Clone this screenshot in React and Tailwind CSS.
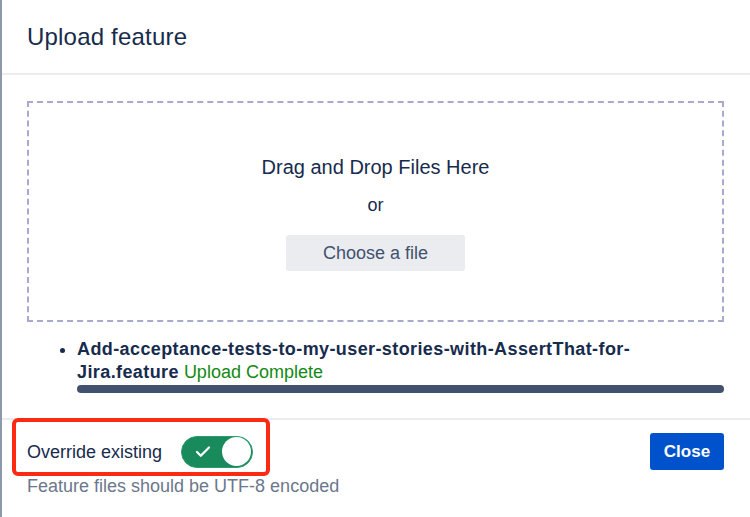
import { Check } from "lucide-react";

const App = () => {
  return (
    <div
      className="relative flex w-[750px] h-[517px] overflow-hidden bg-white text-[#172b4d]"
      style={{ fontFamily: '"Liberation Sans", Arial, sans-serif' }}>
      <div className="w-[2px] bg-[#8e98ad] shrink-0" />

      <div className="flex-1 flex flex-col">
        <div className="h-[75px] flex items-center pl-[25px] border-b-2 border-[#ebecf0] shrink-0">
          <h1 className="text-[24px] leading-[28px] tracking-[0.2px]">Upload feature</h1>
        </div>

        <div className="pl-[25px] pr-[26px]">
          <div className="mt-[26px] h-[221px] border-2 border-dashed border-[#a8a9cf] flex flex-col items-center pt-[52px]">
            <p className="text-[20px] leading-[24px]">Drag and Drop Files Here</p>
            <p className="text-[18px] leading-[22px] mt-[15px]">or</p>
            <button className="mt-[19px] w-[179px] h-[36px] rounded-[3px] bg-[#ebecf0] text-[18px] text-[#42526e]">
              Choose a file
            </button>
          </div>

          <ul className="list-disc pl-[50px] mt-[16px]">
            <li className="text-[18px] leading-[23px]">
              <span className="font-bold tracking-[0.4px]">
                Add-acceptance-tests-to-my-user-stories-with-AssertThat-for-
                <br />
                Jira.feature
              </span>{" "}
              <span className="text-[#128a12]">Upload Complete</span>
              <div className="mt-[1px] h-[8px] rounded-full bg-[#42526e]" />
            </li>
          </ul>
        </div>

        <div className="mt-[25px] border-t-2 border-[#ebecf0] pl-[25px] pr-[26px] pt-[13px]">
          <div className="flex items-center justify-between h-[37px]">
            <div className="flex items-center">
              <span className="text-[18px] leading-[22px]">Override existing</span>
              <div className="ml-[19px] w-[72px] h-[32px] rounded-full bg-[#188a5b] border border-[#2d9b6c] flex items-center justify-between pl-[12px] pr-[1px]">
                <Check className="w-[18px] h-[18px] text-white" strokeWidth={3} />
                <div className="w-[29px] h-[29px] rounded-full bg-white" />
              </div>
            </div>
            <button className="w-[74px] h-[37px] rounded-[3px] bg-[#0052cc] text-white font-bold text-[17px]">
              Close
            </button>
          </div>
          <p className="mt-[5px] text-[18px] leading-[22px] text-[#6b778c]">
            Feature files should be UTF-8 encoded
          </p>
        </div>
      </div>

      <div className="absolute left-[12px] top-[418px] w-[258px] h-[58px] border-4 border-[#fb2a12] rounded-[6px] pointer-events-none" />
    </div>
  );
};

export default App;
